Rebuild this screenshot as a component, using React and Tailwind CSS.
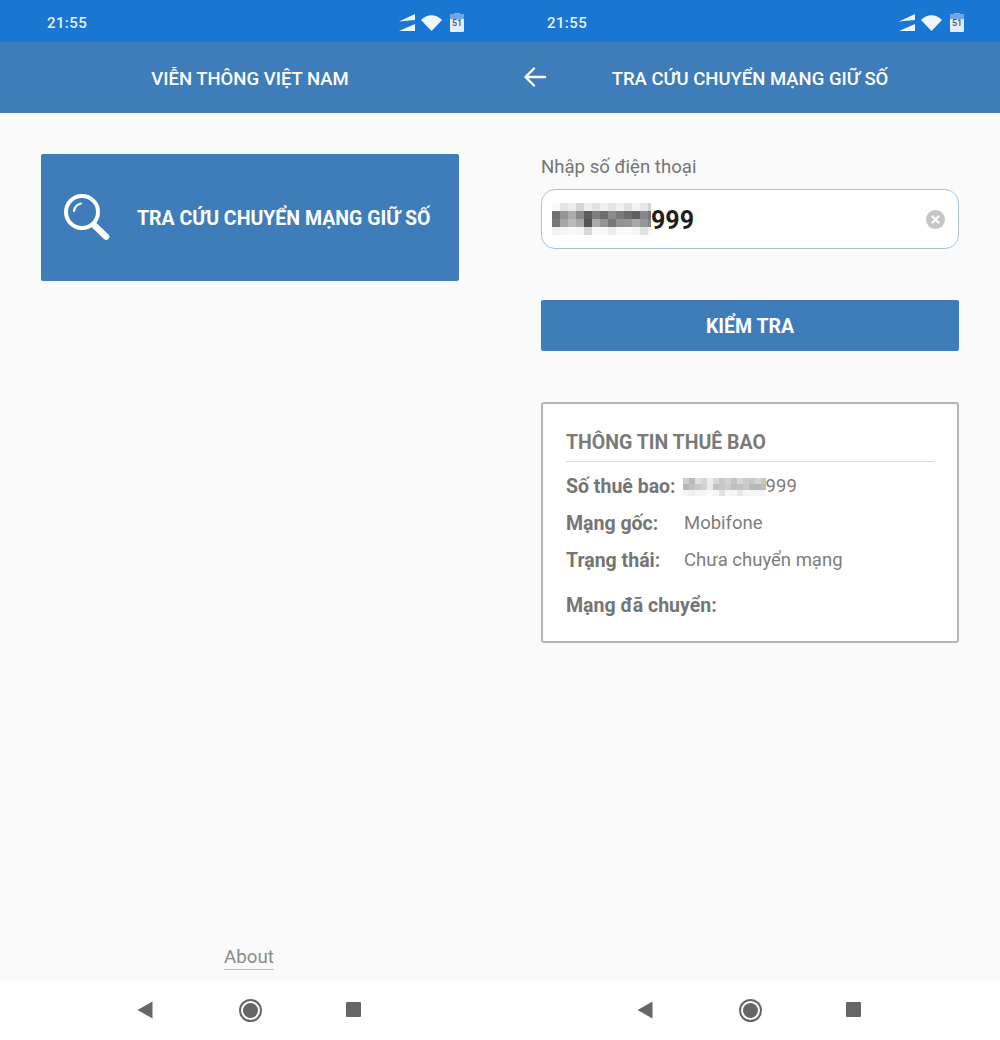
import React from 'react';

const StatusBar = () => (
  <div className="h-[42px] bg-[#1976d3] flex items-center justify-between pt-[4px] pl-[47px] pr-[36px] shrink-0">
    <span className="pt-[1px] text-[15px] font-medium text-[#e8f2fc] tracking-[0.4px]">21:55</span>
    <div className="flex items-center">
      <svg width="16" height="18" viewBox="0 0 16 18" className="mr-[6px]">
        <path d="M0 7.5 L16 0 V6 Z" fill="#eef6fe" />
        <path d="M0 17 L16 10 V17 Z" fill="#eef6fe" />
      </svg>
      <svg width="21" height="16" viewBox="0 0 21 16" className="mr-[8px]">
        <path d="M0 5 C5.5 -1.5 15.5 -1.5 21 5 L10.5 16 Z" fill="#eef6fe" />
      </svg>
      <div className="relative w-[14px] h-[18px] bg-[#e4eefb] rounded-[1px] flex items-center justify-center">
        <div className="absolute -top-[1px] left-[4px] w-[6px] h-[2px] bg-[#7fb0e6]" />
        <div className="absolute top-0 left-0 w-full h-[5px] bg-[#6fa6e2] rounded-t-[1px]" />
        <span className="relative text-[9px] font-medium text-[#4a5562] leading-none">51</span>
      </div>
    </div>
  </div>
);

const Header = ({ title, back }) => (
  <div className="relative h-[71px] bg-[#3f7cba] flex items-center justify-center shrink-0">
    {back && (
      <svg width="24" height="24" viewBox="0 0 24 24" className="absolute left-[23px] top-[23px]" fill="none" stroke="#fff" strokeWidth="2.4" strokeLinecap="round" strokeLinejoin="round">
        <path d="M22 12 H3 M11 3.5 L2.5 12 L11 20.5" />
      </svg>
    )}
    <span className="pt-[4px] text-[18.5px] font-medium text-white">{title}</span>
  </div>
);

const NavBar = () => (
  <div className="h-[59px] bg-white flex items-start justify-center shrink-0 pt-[18px] relative">
    <svg width="16" height="18" viewBox="0 0 16 18" className="absolute left-[137px] top-[20px]">
      <path d="M15.5 0.5 V17.5 L0.5 9 Z" fill="#666" strokeLinejoin="round" />
    </svg>
    <div className="w-[23px] h-[23px] rounded-full border-[2px] border-[#666] flex items-center justify-center">
      <div className="w-[15px] h-[15px] rounded-full bg-[#666]" />
    </div>
    <div className="absolute left-[346px] top-[21px] w-[15px] h-[15px] rounded-[1px] bg-[#666]" />
  </div>
);

// mosaic that hides the digits of the phone number
const Mosaic = ({ width, height, cell, rows }) => (
  <svg width={width} height={height} viewBox={`0 0 ${width} ${height}`} className="shrink-0 blur-[0.6px]">
    {rows.map((row, y) =>
      row.map((shade, x) => (
        <rect key={`${x}-${y}`} x={x * cell} y={y * cell} width={cell + 0.5} height={cell + 0.5} fill={`rgb(${shade},${shade},${shade})`} />
      ))
    )}
  </svg>
);

const inputMosaic = [
  [250, 228, 236, 212, 238, 226, 240, 228, 240, 226, 244, 232, 214],
  [112, 150, 172, 138, 92, 126, 110, 138, 122, 108, 96, 136, 118],
  [120, 168, 186, 170, 84, 172, 150, 120, 146, 150, 168, 150, 132],
  [242, 246, 250, 246, 216, 250, 248, 236, 250, 250, 246, 226, 246],
];

const rowMosaic = [
  [206, 186, 226, 214, 238, 214, 200, 210, 196, 214, 204, 200, 214, 198],
  [182, 194, 202, 210, 236, 194, 200, 204, 192, 194, 202, 186, 184, 190],
  [244, 240, 246, 246, 250, 246, 226, 246, 246, 232, 246, 246, 246, 246],
];

const InfoRow = ({ label, value, className = '' }) => (
  <div className={`flex items-center ${className}`}>
    <span className="w-[118px] font-bold text-[19.5px] text-[#757575]">{label}</span>
    {value && <span className="text-[18.5px] text-[#7d7d7d]">{value}</span>}
  </div>
);

const HomeScreen = () => (
  <div className="w-[500px] h-[1040px] flex flex-col bg-[#fafafa]">
    <StatusBar />
    <Header title="VIỄN THÔNG VIỆT NAM" />
    <div className="flex-1 flex flex-col px-[41px] pt-[41px]">
      <div className="h-[127px] bg-[#3f7cba] rounded-[2px] flex items-center pl-[23px]">
        <svg width="46" height="48" viewBox="0 0 46 48" fill="none" stroke="#fff" strokeLinecap="round" className="shrink-0 -mt-[1px]">
          <circle cx="18" cy="19" r="16" strokeWidth="4" />
          <path d="M10 18 C10.5 14 13 11.5 17 10.5" strokeWidth="2.2" />
          <path d="M31 33 L42 43.5" strokeWidth="6.5" />
        </svg>
        <span className="ml-[27px] pt-[2px] text-[19.5px] font-bold text-white whitespace-nowrap">TRA CỨU CHUYỂN MẠNG GIỮ SỐ</span>
      </div>
      <div className="mt-auto mb-[11px] self-center">
        <span className="block text-[18.7px] leading-[24px] text-[#8a8a8a] border-b border-[#bdbdbd] -ml-[2px]">About</span>
      </div>
    </div>
    <NavBar />
  </div>
);

const LookupScreen = () => (
  <div className="w-[500px] h-[1040px] flex flex-col bg-[#fafafa]">
    <StatusBar />
    <Header title="TRA CỨU CHUYỂN MẠNG GIỮ SỐ" back />
    <div className="flex-1 flex flex-col px-[41px]">
      <p className="mt-[42px] text-[18.6px] leading-[24px] text-[#757575]">Nhập số điện thoại</p>
      <div className="mt-[10px] h-[60px] bg-white border border-[#a5c3de] rounded-[14px] flex items-center pl-[10px] pr-[13px]">
        <Mosaic width={99} height={32} cell={8} rows={inputMosaic} />
        <span className="pt-[3px] text-[25px] font-bold text-[#1e1e1e]">999</span>
        <div className="ml-auto w-[19px] h-[19px] rounded-full bg-[#c6c6c6] flex items-center justify-center">
          <svg width="9" height="9" viewBox="0 0 9 9" stroke="#fff" strokeWidth="2.2" strokeLinecap="round">
            <path d="M1.5 1.5 L7.5 7.5 M7.5 1.5 L1.5 7.5" />
          </svg>
        </div>
      </div>
      <div className="mt-[51px] h-[51px] bg-[#3f7cba] rounded-[2px] flex items-center justify-center">
        <span className="pt-[2px] text-[19.5px] font-bold text-white">KIỂM TRA</span>
      </div>
      <div className="mt-[51px] h-[241px] bg-white border-2 border-[#b4b4b4] rounded-[3px] px-[23px]">
        <div className="h-[58px] flex items-end pb-[4px] border-b border-[#dcdcdc]">
          <span className="text-[19.5px] leading-[28px] font-bold text-[#7a7a7a]">THÔNG TIN THUÊ BAO</span>
        </div>
        <div className="flex items-center mt-[12px] h-[25px]">
          <span className="font-bold text-[19.5px] text-[#757575] whitespace-nowrap">Số thuê bao:</span>
          <div className="ml-[7px] flex items-center">
            <Mosaic width={83} height={18} cell={6} rows={rowMosaic} />
            <span className="text-[18.5px] text-[#7d7d7d]">999</span>
          </div>
        </div>
        <InfoRow label="Mạng gốc:" value="Mobifone" className="mt-[12px] h-[25px]" />
        <InfoRow label="Trạng thái:" value="Chưa chuyển mạng" className="mt-[12px] h-[25px]" />
        <div className="mt-[20px] h-[25px] flex items-center">
          <span className="font-bold text-[19.5px] text-[#757575]">Mạng đã chuyển:</span>
        </div>
      </div>
    </div>
    <NavBar />
  </div>
);

export default function App() {
  return (
    <div className="w-[1000px] h-[1040px] flex overflow-hidden font-['Roboto',sans-serif]">
      <HomeScreen />
      <LookupScreen />
    </div>
  );
}
